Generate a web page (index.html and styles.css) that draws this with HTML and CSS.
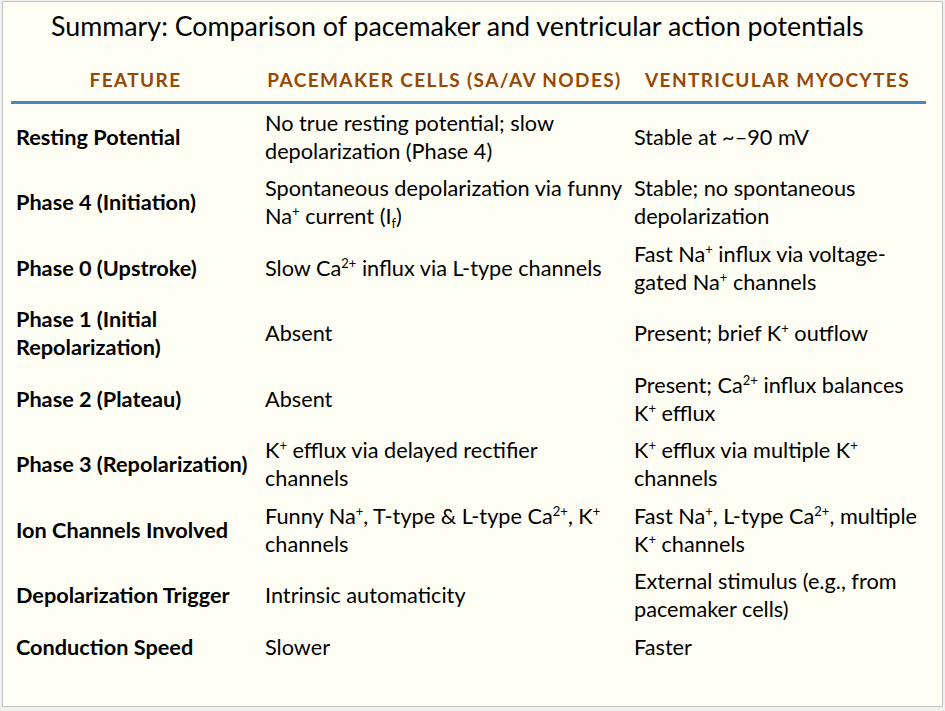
FILE: index.html
```html
<!DOCTYPE html>
<html>
<head>
<meta charset="utf-8">
<link rel="stylesheet" href="styles.css">
</head>
<body>
<div class="slide">
  <h1 class="title">Summary: Comparison of pacemaker and ventricular action potentials</h1>
  <table class="cmp">
    <colgroup><col class="c1"><col class="c2"><col class="c3"></colgroup>
    <thead>
      <tr><th>FEATURE</th><th>PACEMAKER CELLS (SA/AV NODES)</th><th>VENTRICULAR MYOCYTES</th></tr>
    </thead>
    <tbody>
      <tr><td class="lab">Resting Potential</td><td>No true resting potential; slow<br>depolarization (Phase 4)</td><td>Stable at ~–90 mV</td></tr>
      <tr><td class="lab">Phase 4 (Initiation)</td><td>Spontaneous depolarization via funny<br>Na<sup>+</sup> current (I<sub>f</sub>)</td><td>Stable; no spontaneous<br>depolarization</td></tr>
      <tr><td class="lab">Phase 0 (Upstroke)</td><td>Slow Ca<sup>2+</sup> influx via L-type channels</td><td>Fast Na<sup>+</sup> influx via voltage-<br>gated Na<sup>+</sup> channels</td></tr>
      <tr><td class="lab">Phase 1 (Initial<br>Repolarization)</td><td>Absent</td><td>Present; brief K<sup>+</sup> outflow</td></tr>
      <tr><td class="lab">Phase 2 (Plateau)</td><td>Absent</td><td>Present; Ca<sup>2+</sup> influx balances<br>K<sup>+</sup> efflux</td></tr>
      <tr><td class="lab">Phase 3 (Repolarization)</td><td>K<sup>+</sup> efflux via delayed rectifier<br>channels</td><td>K<sup>+</sup> efflux via multiple K<sup>+</sup><br>channels</td></tr>
      <tr><td class="lab">Ion Channels Involved</td><td>Funny Na<sup>+</sup>, T-type &amp; L-type Ca<sup>2+</sup>, K<sup>+</sup><br>channels</td><td>Fast Na<sup>+</sup>, L-type Ca<sup>2+</sup>, multiple<br>K<sup>+</sup> channels</td></tr>
      <tr><td class="lab">Depolarization Trigger</td><td>Intrinsic automaticity</td><td>External stimulus (e.g., from<br>pacemaker cells)</td></tr>
      <tr><td class="lab">Conduction Speed</td><td>Slower</td><td>Faster</td></tr>
    </tbody>
  </table>
</div>
</body>
</html>
```

FILE: styles.css
```css
html, body {
  margin: 0;
  padding: 0;
  background: #f0f0f0;
}
.slide {
  box-sizing: border-box;
  margin: 1px 0 0 2px;
  width: 941px;
  height: 706px;
  border: 1px solid #c4c4c4;
  background: #fffef5;
  font-family: Lato, "Open Sans", sans-serif;
  color: #000;
}
.title {
  margin: 8px 0 0 48px;
  font-size: 26.8px;
  line-height: 32px;
  font-weight: 400;
  white-space: nowrap;
}
.cmp {
  margin: 14px 0 0 8px;
  width: 915px;
  border-collapse: collapse;
  table-layout: fixed;
}
.c1 { width: 249px; }
.c2 { width: 369px; }
.c3 { width: 297px; }
.cmp th {
  padding: 12px 0 9px;
  line-height: 24px;
  font-size: 19px;
  font-weight: 700;
  letter-spacing: 1.4px;
  color: #974806;
  text-align: center;
  white-space: nowrap;
  border-bottom: 3px solid #4f81bd;
}
.cmp td {
  padding: 4.75px 5px;
  font-size: 21.7px;
  line-height: 28px;
  vertical-align: middle;
  white-space: nowrap;
  text-align: left;
}
.cmp td.lab {
  font-weight: 700;
}
sup, sub {
  font-size: 0.6em;
  line-height: 0;
}
sup { vertical-align: 0.6em; }
sub { vertical-align: -0.3em; }
```
